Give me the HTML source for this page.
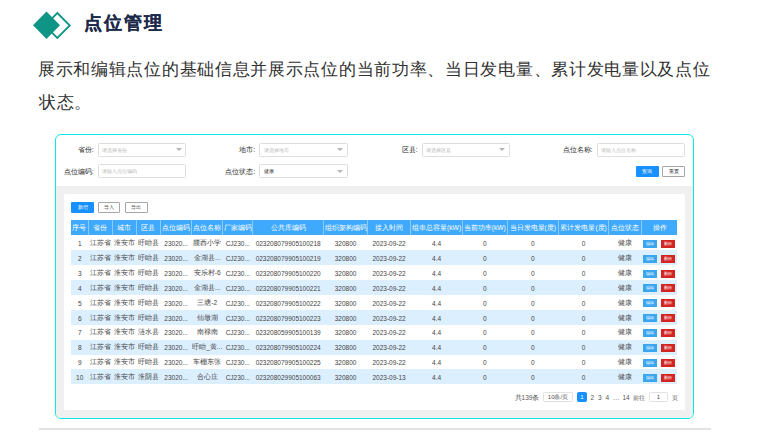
<!DOCTYPE html>
<html><head><meta charset="utf-8">
<style>
*{box-sizing:border-box;margin:0;padding:0}
html,body{width:760px;height:437px;overflow:hidden;background:#fff;font-family:"Liberation Sans",sans-serif}
.abs{position:absolute}
#title{left:84px;top:11px;font-size:18px;font-weight:bold;color:#1b2a4a;white-space:nowrap;letter-spacing:2px;-webkit-text-stroke:0.15px #1b2a4a}
.para{left:38px;font-size:17px;letter-spacing:0.7px;color:#303030;white-space:nowrap}
#shot{left:55px;top:134px;width:639px;height:285px;border:1px solid #0ae8ea;border-radius:6px;overflow:hidden;background:#fff}
#gray{position:absolute;left:0;top:51px;width:100%;height:240px;background:#f0f0f0}
#card{left:8px;top:59px;width:621px;height:216px;background:#fff;border-radius:2px}
.lbl{font-size:7px;color:#2a2a2a;white-space:nowrap;text-align:right}
.inp{height:14px;width:88px;border:1px solid #dedede;border-radius:1.5px;background:#fff;font-size:5.3px;color:#b8b8b8;padding-left:3.2px;line-height:12px;white-space:nowrap}
.arr{position:absolute;right:3.6px;top:4.5px;width:0;height:0;border-left:3px solid transparent;border-right:3px solid transparent;border-top:3.5px solid #b5b5b5}
.btn{height:11.3px;font-size:5.2px;display:flex;align-items:center;justify-content:center;padding-top:0.6px;white-space:nowrap;border-radius:1px}
#line{left:39px;top:428px;width:672px;height:2px;background:#e3e3e3}
table{border-collapse:collapse;table-layout:fixed;position:absolute;left:7px;top:26.4px}
td,th{font-size:6.5px;white-space:nowrap;overflow:hidden;text-align:center;padding:0;font-weight:normal}
th{background:#3fa9fb;color:#fff;height:15px;padding-top:1.6px;border-left:1px solid #8fcaf7;font-size:6.7px}
th:first-child{border-left:none}
td{height:14.9px;color:#444;padding-top:1.6px}
tr.s td{background:#dcefff}
.eb{display:inline-block;width:13.5px;height:8px;background:#3aa6f0;color:#fff;font-size:3.5px;line-height:8px;vertical-align:middle;margin:0 2px}
.db{display:inline-block;width:14.5px;height:8px;background:#d32424;color:#fff;font-size:3.5px;line-height:8px;vertical-align:middle;margin:0 2px}
.pg{position:absolute;font-size:6.5px;color:#555;white-space:nowrap;text-align:center;line-height:10px;height:10px}
.pbox{position:absolute;border:1px solid #e2e2e2;border-radius:1.5px;top:198.3px;height:10.2px;font-size:6px;color:#555;text-align:center;line-height:8.5px;white-space:nowrap}
</style></head><body>
<svg class="abs" style="left:0;top:0" width="100" height="50">
  <polygon points="57.3,13 69.8,25.5 57.3,38 44.8,25.5" fill="none" stroke="#0f9586" stroke-width="1.8"/>
  <polygon points="46.5,11.5 60,25.3 46.5,39 33,25.3" fill="#0f9586"/>
</svg>
<div id="title" class="abs">点位管理</div>
<div class="abs para" style="top:58px">展示和编辑点位的基础信息并展示点位的当前功率、当日发电量、累计发电量以及点位</div>
<div class="abs para" style="top:91px;left:39px">状态。</div>

<div id="shot" class="abs">
  <!-- filters -->
  <div class="abs lbl" style="right:599.3px;top:10.3px">省份:</div>
  <div class="abs inp" style="left:42.3px;top:7.6px">请选择省份<div class="arr"></div></div>
  <div class="abs lbl" style="right:437.7px;top:10.3px">地市:</div>
  <div class="abs inp" style="left:203.4px;top:7.6px;width:88.6px">请选择地市<div class="arr"></div></div>
  <div class="abs lbl" style="right:275.3px;top:10.3px">区县:</div>
  <div class="abs inp" style="left:365.7px;top:7.6px">请选择区县<div class="arr"></div></div>
  <div class="abs lbl" style="right:100.5px;top:10.3px">点位名称:</div>
  <div class="abs inp" style="left:541.2px;top:7.6px">请输入点位名称</div>

  <div class="abs lbl" style="right:599.3px;top:32px">点位编码:</div>
  <div class="abs inp" style="left:42.3px;top:29.3px">请输入点位编码</div>
  <div class="abs lbl" style="right:437.7px;top:32px">点位状态:</div>
  <div class="abs inp" style="left:203.4px;top:29.3px;color:#333;width:88.6px">健康<div class="arr"></div></div>
  <div class="abs btn" style="left:580px;top:30.8px;width:22.7px;background:#1890ff;color:#fff">查询</div>
  <div class="abs btn" style="left:606.3px;top:30.8px;width:23px;border:1px solid #a6a6a6;color:#444">重置</div>

  <div id="gray"></div>
  <div id="card" class="abs">
    <div class="abs btn" style="left:7px;top:7.6px;width:23px;background:#1890ff;color:#fff">新增</div>
    <div class="abs btn" style="left:34.2px;top:7.6px;width:22px;border:1px solid #a6a6a6;color:#444">导入</div>
    <div class="abs btn" style="left:60.5px;top:7.6px;width:23px;border:1px solid #a6a6a6;color:#444">导出</div>
    <table>
      <colgroup>
        <col style="width:17.4px"><col style="width:24.1px"><col style="width:23.8px"><col style="width:24.3px">
        <col style="width:31px"><col style="width:31.3px"><col style="width:29.8px"><col style="width:71px">
        <col style="width:43.8px"><col style="width:43.3px"><col style="width:51.6px"><col style="width:44.9px">
        <col style="width:51.2px"><col style="width:50.4px"><col style="width:32.3px"><col style="width:36.3px">
      </colgroup>
      <tr><th>序号</th><th>省份</th><th>城市</th><th>区县</th><th>点位编码</th><th>点位名称</th><th>厂家编码</th><th>公共库编码</th><th>组织架构编码</th><th>接入时间</th><th>组串总容量(kW)</th><th>当前功率(kW)</th><th>当日发电量(度)</th><th>累计发电量(度)</th><th>点位状态</th><th>操作</th></tr>
      <tr><td>1</td><td>江苏省</td><td>淮安市</td><td>盱眙县</td><td>23020...</td><td>腰西小学</td><td>CJ230...</td><td>023208079905100218</td><td>320800</td><td>2023-09-22</td><td>4.4</td><td>0</td><td>0</td><td>0</td><td>健康</td><td><span class="eb">编辑</span><span class="db">删除</span></td></tr>
      <tr class="s"><td>2</td><td>江苏省</td><td>淮安市</td><td>盱眙县</td><td>23020...</td><td>金湖县...</td><td>CJ230...</td><td>023208079905100219</td><td>320800</td><td>2023-09-22</td><td>4.4</td><td>0</td><td>0</td><td>0</td><td>健康</td><td><span class="eb">编辑</span><span class="db">删除</span></td></tr>
      <tr><td>3</td><td>江苏省</td><td>淮安市</td><td>盱眙县</td><td>23020...</td><td>安乐村-6</td><td>CJ230...</td><td>023208079905100220</td><td>320800</td><td>2023-09-22</td><td>4.4</td><td>0</td><td>0</td><td>0</td><td>健康</td><td><span class="eb">编辑</span><span class="db">删除</span></td></tr>
      <tr class="s"><td>4</td><td>江苏省</td><td>淮安市</td><td>盱眙县</td><td>23020...</td><td>金湖县...</td><td>CJ230...</td><td>023208079905100221</td><td>320800</td><td>2023-09-22</td><td>4.4</td><td>0</td><td>0</td><td>0</td><td>健康</td><td><span class="eb">编辑</span><span class="db">删除</span></td></tr>
      <tr><td>5</td><td>江苏省</td><td>淮安市</td><td>盱眙县</td><td>23020...</td><td>三塘-2</td><td>CJ230...</td><td>023208079905100222</td><td>320800</td><td>2023-09-22</td><td>4.4</td><td>0</td><td>0</td><td>0</td><td>健康</td><td><span class="eb">编辑</span><span class="db">删除</span></td></tr>
      <tr class="s"><td>6</td><td>江苏省</td><td>淮安市</td><td>盱眙县</td><td>23020...</td><td>仙墩湖</td><td>CJ230...</td><td>023208079905100223</td><td>320800</td><td>2023-09-22</td><td>4.4</td><td>0</td><td>0</td><td>0</td><td>健康</td><td><span class="eb">编辑</span><span class="db">删除</span></td></tr>
      <tr><td>7</td><td>江苏省</td><td>淮安市</td><td>涟水县</td><td>23020...</td><td>南禄南</td><td>CJ230...</td><td>023208059905100139</td><td>320800</td><td>2023-09-22</td><td>4.4</td><td>0</td><td>0</td><td>0</td><td>健康</td><td><span class="eb">编辑</span><span class="db">删除</span></td></tr>
      <tr class="s"><td>8</td><td>江苏省</td><td>淮安市</td><td>盱眙县</td><td>23020...</td><td>盱眙_黄...</td><td>CJ230...</td><td>023208079905100224</td><td>320800</td><td>2023-09-22</td><td>4.4</td><td>0</td><td>0</td><td>0</td><td>健康</td><td><span class="eb">编辑</span><span class="db">删除</span></td></tr>
      <tr><td>9</td><td>江苏省</td><td>淮安市</td><td>盱眙县</td><td>23020...</td><td>车棚东张</td><td>CJ230...</td><td>023208079905100225</td><td>320800</td><td>2023-09-22</td><td>4.4</td><td>0</td><td>0</td><td>0</td><td>健康</td><td><span class="eb">编辑</span><span class="db">删除</span></td></tr>
      <tr class="s"><td>10</td><td>江苏省</td><td>淮安市</td><td>淮阴县</td><td>23020...</td><td>合心庄</td><td>CJ230...</td><td>023208029905100063</td><td>320800</td><td>2023-09-13</td><td>4.4</td><td>0</td><td>0</td><td>0</td><td>健康</td><td><span class="eb">编辑</span><span class="db">删除</span></td></tr>
    </table>
    <div class="pg" style="left:448px;top:198.5px;width:30px">共139条</div>
    <div class="pbox" style="left:479.4px;width:29.2px">10条/页</div>
    <div class="pbox" style="left:513px;width:9.8px;background:#1890ff;border-color:#1890ff;color:#fff">1</div>
    <div class="pg" style="left:524.3px;top:198.5px;width:8px">2</div>
    <div class="pg" style="left:531.9px;top:198.5px;width:8px">3</div>
    <div class="pg" style="left:539.3px;top:198.5px;width:8px">4</div>
    <div class="pg" style="left:547.3px;top:198.5px;width:10px">…</div>
    <div class="pg" style="left:557.1px;top:198.5px;width:10px">14</div>
    <div class="pg" style="left:565.4px;top:198.5px;width:20px;font-size:5.8px">前往</div>
    <div class="pbox" style="left:585.2px;width:18.4px">1</div>
    <div class="pg" style="left:604.6px;top:198.5px;width:12px;font-size:5.8px">页</div>
  </div>
</div>
<div id="line" class="abs"></div>
</body></html>
